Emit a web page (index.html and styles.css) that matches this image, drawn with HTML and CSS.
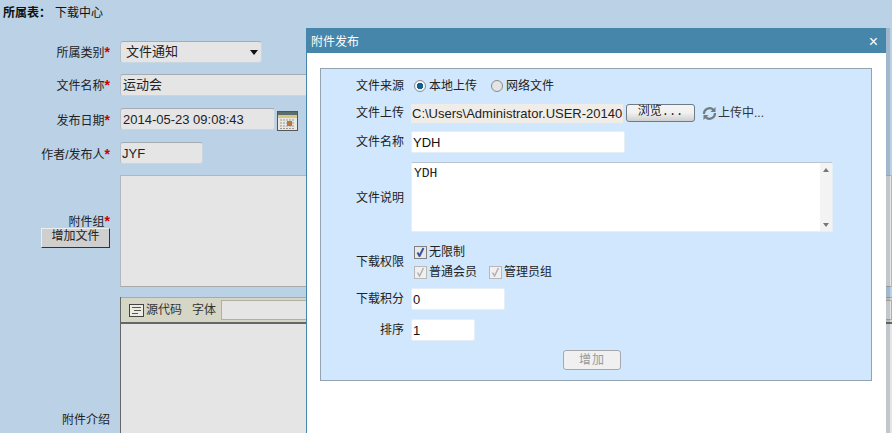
FILE: index.html
```html
<!DOCTYPE html>
<html lang="zh">
<head>
<meta charset="utf-8">
<title>附件发布</title>
<link rel="stylesheet" href="styles.css">
</head>
<body>
<main class="page">
  <div class="crumb"><b>所属表：</b><span>下载中心</span></div>
  <div class="form">
    <div class="row row-select">
      <div class="label">所属类别<i>*</i></div>
      <div class="box select">文件通知<span class="caret"></span></div>
    </div>
    <div class="row row-name">
      <div class="label">文件名称<i>*</i></div>
      <div class="box name">运动会</div>
    </div>
    <div class="row row-date">
      <div class="label">发布日期<i>*</i></div>
      <div class="box date">2014-05-23 09:08:43</div>
      <svg class="cal" width="21" height="20" viewBox="0 0 21 20">
        <rect x=".5" y=".5" width="20" height="19" fill="#e8e8e0" stroke="#555"/>
        <rect x="1" y="1" width="19" height="3" fill="#5a6e6e"/>
        <rect x="1" y="4" width="19" height="3" fill="#d8c888"/>
        <path d="M3 9h15M3 12h15M3 15h15M3 17.500h15" stroke="#999" stroke-dasharray="2 1"/>
        <rect x="10" y="10" width="5" height="5" fill="#b87840"/>
      </svg>
    </div>
    <div class="row row-author">
      <div class="label">作者/发布人<i>*</i></div>
      <div class="box author">JYF</div>
    </div>
    <div class="row row-attach">
      <div class="label stack">
        <div class="attach-title">附件组<i>*</i></div>
        <div class="add-file">增加文件</div>
      </div>
      <div class="attach-box"></div>
    </div>
    <div class="row row-editor">
      <div class="label">附件介绍</div>
      <div class="editor">
        <div class="toolbar">
          <svg class="src" width="15" height="13" viewBox="0 0 15 13">
            <rect x=".5" y=".5" width="14" height="12" fill="#ecece2" stroke="#444"/>
            <path d="M3 3.500h9M5 6.500h7M3 9.500h6" stroke="#555"/>
          </svg>
          <span class="tool-a">源代码</span>
          <span class="tool-b">字体</span>
          <div class="tool-select"></div>
        </div>
      </div>
    </div>
  </div>

  <section class="dialog">
    <header class="dialog-head"><span>附件发布</span><span class="close">×</span></header>
    <div class="panel">
      <div class="line l-source">
        <div class="cap">文件来源</div>
        <span class="radio on"></span><span class="opt">本地上传</span>
        <span class="radio net"></span><span class="opt">网络文件</span>
      </div>
      <div class="line l-upload">
        <div class="cap">文件上传</div>
        <div class="path">C:\Users\Administrator.USER-20140</div>
        <div class="browse">浏览...</div>
        <svg class="spin" width="15" height="15" viewBox="0 0 15 15" fill="none" stroke="#6f7c80" stroke-width="2.200">
          <path d="M2 8a5.500 5.500 0 0 1 9.500-4"/>
          <path d="M13 7a5.500 5.500 0 0 1-9.500 4"/>
          <path d="M13.500 1v5h-5z" fill="#6f7c80" stroke="none"/>
          <path d="M1.500 14V9h5z" fill="#6f7c80" stroke="none"/>
        </svg>
        <span class="status">上传中...</span>
      </div>
      <div class="line l-name">
        <div class="cap">文件名称</div>
        <div class="input w-name">YDH</div>
      </div>
      <div class="line l-desc">
        <div class="cap">文件说明</div>
        <div class="area">
          <div class="area-text">YDH</div>
          <div class="scroll"><span class="up"></span><span class="down"></span></div>
        </div>
      </div>
      <div class="line l-perm">
        <div class="cap">下载权限</div>
        <div class="perm">
          <div class="perm-row"><span class="check on"><svg width="9" height="10" viewBox="0 0 9 10"><path d="M1.500 5.500 3.500 9 7.500 1" fill="none" stroke="#3c4f9a" stroke-width="2"/></svg></span><span class="opt">无限制</span></div>
          <div class="perm-row">
            <span class="check"><svg width="9" height="10" viewBox="0 0 9 10"><path d="M1.500 5.500 3.500 9 7.500 1" fill="none" stroke="#b0b0b0" stroke-width="1.500"/></svg></span><span class="opt">普通会员</span>
            <span class="check second"><svg width="9" height="10" viewBox="0 0 9 10"><path d="M1.500 5.500 3.500 9 7.500 1" fill="none" stroke="#b0b0b0" stroke-width="1.500"/></svg></span><span class="opt">管理员组</span>
          </div>
        </div>
      </div>
      <div class="line l-score">
        <div class="cap">下载积分</div>
        <div class="input w-score">0</div>
      </div>
      <div class="line l-order">
        <div class="cap">排序</div>
        <div class="input w-order">1</div>
      </div>
      <div class="actions"><div class="submit">增加</div></div>
    </div>
  </section>
</main>
</body>
</html>
```
FILE: styles.css
```css
html, body {
  margin: 0;
  height: 100%;
  overflow: hidden;
}
body {
  background: #bad1e6;
  color: #222;
  font: 12px/16px "Liberation Sans", "Noto Sans CJK SC", sans-serif;
}
.page {
  height: 433px;
  overflow: hidden;
  position: relative;
}
.crumb {
  display: flex;
  height: 26px;
  align-items: center;
  padding-left: 3px;
  color: #111;
}
.crumb b { width: 52px; }

.form { padding-top: 15px; }
.row {
  display: flex;
  gap: 10px;
  align-items: center;
}
.label {
  flex: 0 0 110px;
  text-align: right;
  color: #222;
}
.label i {
  color: #c00;
  font-style: normal;
  font-weight: bold;
  font-size: 14px;
  line-height: 10px;
}
.box {
  box-sizing: border-box;
  background: #e5e5e5;
  border: 1px solid #c9d6e2;
  border-top-color: #a3acb5;
  border-left-color: #b4c0cb;
  border-radius: 3px;
  height: 22px;
  line-height: 20px;
  padding-left: 3px;
  font-size: 13px;
}
.select {
  width: 142px;
  padding-left: 5px;
  position: relative;
}
.caret {
  position: absolute;
  right: 3px;
  top: 8px;
  border: 4px solid transparent;
  border-top: 5px solid #111;
  border-bottom: 0;
}
.row-select { height: 22px; }
.row-name { height: 22px; margin-top: 11px; }
.row-date { height: 22px; margin-top: 12px; }
.row-author { height: 22px; margin-top: 12px; }
.row-attach { height: 112px; margin-top: 11px; }
.row-editor { height: 246px; margin-top: 10px; }
.row-select .label, .row-name .label { padding-top: 2px; }
.row-date .label, .row-author .label { padding-top: 4px; }
.name { width: 380px; padding-left: 2px; }
.date { width: 155px; padding-left: 2px; line-height: 22px; }
.cal { margin-left: -8px; margin-top: 4px; }
.author { width: 83px; padding-left: 1px; line-height: 22px; }
.stack {
  align-self: stretch;
  display: flex;
  flex-direction: column;
  align-items: flex-end;
  padding-top: 41px;
}
.attach-title { line-height: 10px; }
.add-file {
  box-sizing: border-box;
  width: 69px;
  height: 20px;
  margin-top: 1px;
  background: #cfcfcf;
  border-right: 1px solid #333;
  border-bottom: 1px solid #333;
  border-top: 1px solid #eee;
  border-left: 1px solid #eee;
  text-align: center;
  line-height: 15px;
}
.attach-box {
  flex: 1;
  align-self: stretch;
  box-sizing: border-box;
  background: #e5e5e5;
  border: 1px solid #b0b8bf;
  border-bottom-color: #aaa;
}
.editor {
  flex: 1;
  align-self: stretch;
  box-sizing: border-box;
  background: #e5e5e5;
  border-left: 1px solid #666;
}
.toolbar {
  box-sizing: border-box;
  height: 27px;
  display: flex;
  align-items: center;
  background: #d5d6c6;
  border-top: 1px solid #a8aca8;
  border-bottom: 2px solid #666;
  padding-left: 8px;
  color: #333;
  font-size: 12px;
}
.src { flex: none; }
.tool-a { margin-left: 2px; }
.tool-b { margin-left: 10px; }
.tool-select {
  flex: 1;
  box-sizing: border-box;
  height: 20px;
  margin-left: 5px;
  background: #e5e5e5;
  border: 1px solid #b0b0a0;
}

.dialog {
  position: absolute;
  left: 306px;
  top: 28px;
  width: 580px;
  height: 420px;
  box-sizing: border-box;
  background: #fff;
  border-left: 1px solid #4686aa;
  box-shadow: 4px 0 0 rgba(60, 80, 100, .2);
}
.dialog-head {
  display: flex;
  justify-content: space-between;
  align-items: center;
  height: 25px;
  padding: 2px 8px 0 4px;
  box-sizing: border-box;
  background: #4686aa;
  color: #fff;
}
.close { font-size: 16px; }
.panel {
  box-sizing: border-box;
  margin: 15px 0 0 13px;
  width: 552px;
  height: 313px;
  background: #d0e7fd;
  border: 1px solid #93a3b0;
}
.line {
  display: flex;
  align-items: center;
}
.cap {
  flex: 0 0 83px;
  text-align: right;
  margin-right: 7px;
  color: #222;
}
.l-source { height: 18px; margin-top: 8px; }
.l-upload { height: 20px; margin-top: 8px; }
.l-name { height: 22px; margin-top: 8px; }
.l-desc { height: 70px; margin-top: 9px; }
.l-perm { height: 40px; margin-top: 10px; }
.l-score { height: 22px; margin-top: 6px; }
.l-order { height: 22px; margin-top: 9px; }
.l-desc .cap { padding-top: 2px; }
.opt { color: #222; }
.radio {
  box-sizing: border-box;
  width: 12px;
  height: 12px;
  margin: 0 3px 0 3px;
  border-radius: 50%;
  border: 1px solid #8a8a8a;
  background: #e4e4e4;
}
.radio.on {
  background: radial-gradient(circle, #0f5f96 0 3px, #f4f4f4 3.500px);
}
.radio.net { margin-left: 14px; }
.path {
  box-sizing: border-box;
  width: 212px;
  height: 19px;
  background: #f0ede8;
  line-height: 19px;
  padding-left: 1px;
  font-size: 13px;
  white-space: nowrap;
  overflow: hidden;
}
.browse {
  box-sizing: border-box;
  width: 69px;
  height: 18px;
  margin-left: 3px;
  background: linear-gradient(#f4f4f4, #f0f0f0 50%, #cfcfcf);
  border: 1px solid #6e7a84;
  border-radius: 3px;
  text-align: center;
  line-height: 15px;
  font-family: "Liberation Mono", "Noto Sans CJK SC", monospace;
  font-size: 12px;
}
.spin { margin-left: 7px; flex: none; }
.status { margin-left: 1px; color: #333; }
.input, .area {
  box-sizing: border-box;
  background: #fff;
  border: 1px solid #e6eef6;
  border-radius: 2px;
}
.input {
  height: 22px;
  line-height: 22px;
  padding-left: 1px;
  font-size: 13px;
  color: #111;
}
.w-name { width: 214px; }
.w-score { width: 94px; }
.w-order { width: 64px; }
.area {
  width: 422px;
  height: 70px;
  display: flex;
  justify-content: space-between;
  border-color: #b8c4ce #e6eef6 #e6eef6 #e6eef6;
}
.area-text {
  font: 13px/16px "Liberation Mono", monospace;
  padding: 3px 0 0 2px;
}
.scroll {
  width: 12px;
  background: #f3f3f3;
  position: relative;
}
.up, .down {
  position: absolute;
  left: 3px;
  border: 3.500px solid transparent;
}
.up { top: 5px; border-bottom: 4px solid #777; border-top: 0; }
.down { bottom: 4px; border-top: 4px solid #777; border-bottom: 0; }
.perm { padding-left: 3px; }
.perm-row {
  display: flex;
  align-items: center;
  height: 20px;
}
.check {
  box-sizing: border-box;
  display: flex;
  align-items: center;
  justify-content: center;
  width: 13px;
  height: 13px;
  margin-right: 2px;
  background: #f0f0f0;
  border: 1px solid #b8b8b8;
}
.check.on { background: #e8e8e8; border-color: #808080; }
.check.second { margin-left: 12px; }
.actions {
  display: flex;
  justify-content: flex-end;
  margin-top: 9px;
  padding-right: 250px;
}
.submit {
  box-sizing: border-box;
  width: 58px;
  height: 20px;
  background: #f0f0f0;
  border: 1px solid #a4a8ac;
  border-radius: 3px;
  color: #999;
  text-align: center;
  line-height: 18px;
  letter-spacing: 1px;
}
```
